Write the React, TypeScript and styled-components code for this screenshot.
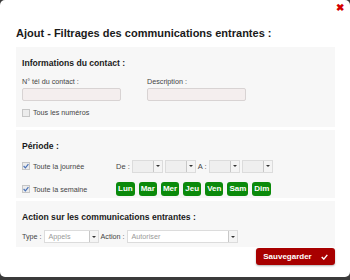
import React from "react";
import styled, { createGlobalStyle } from "styled-components";

const GlobalStyle = createGlobalStyle`
  html, body {
    margin: 0;
    padding: 0;
    background: #3b3b3b;
    font-family: "Liberation Sans", Arial, sans-serif;
    color: #222;
  }
`;

const Modal = styled.div`
  position: relative;
  box-sizing: border-box;
  width: 350px;
  height: 277px;
  background: #ffffff;
  border-radius: 5px;
  padding: 0 15px 0 16px;
`;

const Close = styled.div`
  position: absolute;
  top: 2px;
  right: 6px;
  color: #d40000;
  font-size: 10px;
  font-weight: bold;
`;

const Title = styled.h1`
  margin: 0;
  padding: 27px 0 8px 0;
  font-size: 11px;
  line-height: 12px;
  font-weight: bold;
  color: #1a1a1a;
`;

const Panel = styled.div<{ $h: number }>`
  box-sizing: border-box;
  height: ${(p) => p.$h}px;
  background: #f7f7f7;
  padding: 11px 6px 0 6px;
  margin-bottom: 3px;
`;

const PanelTitle = styled.h2`
  margin: 0;
  font-size: 8.6px;
  line-height: 11px;
  font-weight: bold;
  color: #1a1a1a;
`;

const FieldsRow = styled.div`
  display: flex;
  gap: 26px;
  margin-top: 8px;
`;

const Field = styled.div`
  display: flex;
  flex-direction: column;
  gap: 2px;
`;

const Label = styled.span`
  font-size: 7.2px;
  line-height: 9px;
  color: #444;
`;

const TextInput = styled.div`
  box-sizing: border-box;
  width: 99px;
  height: 13px;
  background: #f4eeee;
  border: 1px solid #d8d3d3;
  border-radius: 2px;
`;

const CheckRow = styled.div<{ $top: number }>`
  display: flex;
  align-items: center;
  gap: 3px;
  margin-top: ${(p) => p.$top}px;
  font-size: 7.2px;
  color: #444;
`;

const Box = styled.span`
  box-sizing: border-box;
  width: 8px;
  height: 8px;
  background: #ececec;
  border: 1px solid #c6c6c6;
  display: flex;
  align-items: center;
  justify-content: center;
`;

const PeriodRow = styled.div<{ $top: number }>`
  display: flex;
  align-items: center;
  height: 14px;
  margin-top: ${(p) => p.$top}px;
`;

const LeftCol = styled.div`
  width: 94px;
`;

const Inline = styled.div`
  display: flex;
  align-items: center;
  gap: 2px;
  font-size: 7.5px;
  color: #444;
`;

const SelectBox = styled.div<{ $w: number; $bg: string }>`
  box-sizing: border-box;
  width: ${(p) => p.$w}px;
  height: 13px;
  display: flex;
  background: ${(p) => p.$bg};
  border: 1px solid #dcdcdc;
  font-size: 7.2px;
  color: #999;
`;

const SelectText = styled.span`
  flex: 1;
  padding-left: 4px;
  line-height: 11px;
`;

const Arrow = styled.span`
  box-sizing: border-box;
  width: 9px;
  height: 11px;
  border-left: 1px solid #c8c8c8;
  background: #f4f4f4;
  display: flex;
  align-items: center;
  justify-content: center;
  &::after {
    content: "";
    border-left: 2px solid transparent;
    border-right: 2px solid transparent;
    border-top: 2.5px solid #333;
  }
`;

const Days = styled.div`
  display: flex;
  gap: 4px;
`;

const Day = styled.span`
  box-sizing: border-box;
  height: 14px;
  min-width: 18px;
  padding: 0 2px;
  background: #0b8a0b;
  border-radius: 3px;
  color: #fff;
  font-size: 8px;
  font-weight: bold;
  line-height: 14px;
  text-align: center;
`;

const ActionRow = styled.div`
  display: flex;
  align-items: center;
  gap: 2px;
  margin-top: 7px;
  font-size: 7.2px;
  color: #444;
`;

const Footer = styled.div`
  display: flex;
  justify-content: flex-end;
  margin-top: -2px;
`;

const SaveButton = styled.button`
  box-sizing: border-box;
  width: 79px;
  height: 17px;
  border: none;
  border-radius: 3px;
  background: #a80000;
  color: #fff;
  font-family: "Liberation Sans", Arial, sans-serif;
  font-size: 8px;
  font-weight: bold;
  display: flex;
  align-items: center;
  justify-content: center;
  gap: 9px;
  padding: 0;
  box-shadow: 0 1px 2px rgba(0, 0, 0, 0.3);
`;

const Check = ({ color }: { color: string }) => (
  <svg width="7" height="6" viewBox="0 0 10 8">
    <path d="M1 4 L4 7 L9 1" fill="none" stroke={color} strokeWidth="2" />
  </svg>
);

const Select = ({ w, text, bg }: { w: number; text?: string; bg: string }) => (
  <SelectBox $w={w} $bg={bg}>
    <SelectText>{text}</SelectText>
    <Arrow />
  </SelectBox>
);

const days = ["Lun", "Mar", "Mer", "Jeu", "Ven", "Sam", "Dim"];

const App = () => {
  return (
    <>
      <GlobalStyle />
      <Modal>
        <Close>✖</Close>
        <Title>Ajout - Filtrages des communications entrantes :</Title>

        <Panel $h={80}>
          <PanelTitle>Informations du contact :</PanelTitle>
          <FieldsRow>
            <Field>
              <Label>N° tél du contact :</Label>
              <TextInput />
            </Field>
            <Field>
              <Label>Description :</Label>
              <TextInput />
            </Field>
          </FieldsRow>
          <CheckRow $top={7}>
            <Box />
            Tous les numéros
          </CheckRow>
        </Panel>

        <Panel $h={68}>
          <PanelTitle>Période :</PanelTitle>
          <PeriodRow $top={7}>
            <LeftCol>
              <CheckRow $top={0}>
                <Box>
                  <Check color="#4a72b8" />
                </Box>
                Toute la journée
              </CheckRow>
            </LeftCol>
            <Inline>
              De :
              <Select w={31} bg="#efefef" />
              <Select w={31} bg="#efefef" />
              A :
              <Select w={31} bg="#efefef" />
              <Select w={31} bg="#efefef" />
            </Inline>
          </PeriodRow>
          <PeriodRow $top={9}>
            <LeftCol>
              <CheckRow $top={0}>
                <Box>
                  <Check color="#4a72b8" />
                </Box>
                Toute la semaine
              </CheckRow>
            </LeftCol>
            <Days>
              {days.map((d) => (
                <Day key={d}>{d}</Day>
              ))}
            </Days>
          </PeriodRow>
        </Panel>

        <Panel $h={46}>
          <PanelTitle>Action sur les communications entrantes :</PanelTitle>
          <ActionRow>
            Type :
            <Select w={55} text="Appels" bg="#fff" />
            Action :
            <Select w={111} text="Autoriser" bg="#fff" />
          </ActionRow>
        </Panel>

        <Footer>
          <SaveButton>
            Sauvegarder
            <Check color="#fff" />
          </SaveButton>
        </Footer>
      </Modal>
    </>
  );
};

export default App;
